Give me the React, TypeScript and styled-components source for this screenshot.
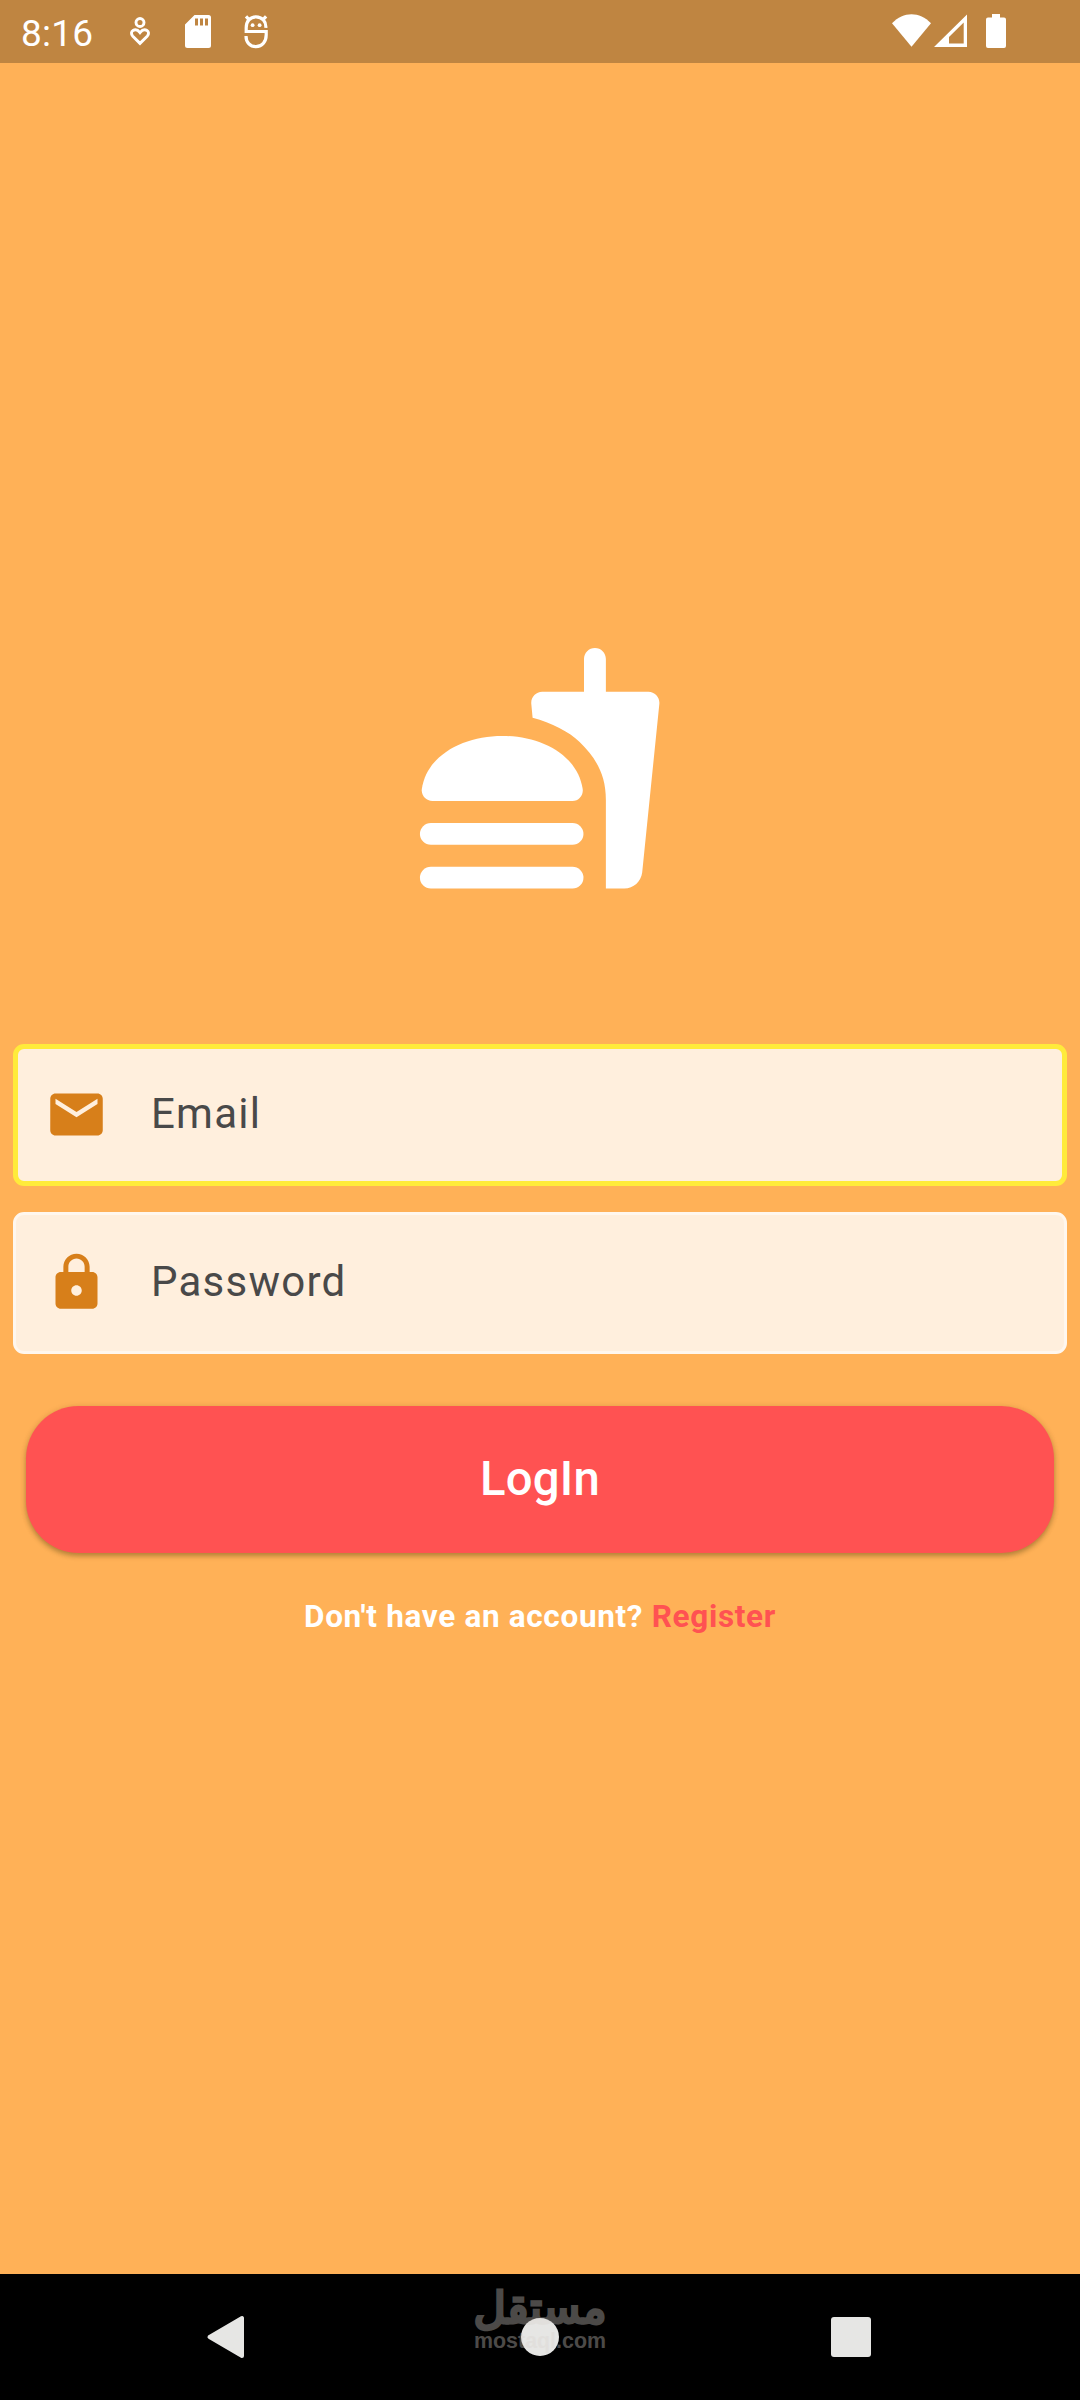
import React from "react";
import styled, { createGlobalStyle } from "styled-components";

const GlobalStyle = createGlobalStyle`
  *, *::before, *::after { box-sizing: border-box; }
  body { margin: 0; font-family: Roboto, sans-serif; }
`;

const Screen = styled.div`
  display: flex;
  flex-direction: column;
  width: 1080px;
  height: 2400px;
  background: #ffb157;
  overflow: hidden;
`;

const StatusBar = styled.header`
  display: flex;
  justify-content: space-between;
  height: 63px;
  padding: 0 72px 0 21px;
  background: #bf8541;
  color: #fff;
`;

const StatusGroup = styled.div`
  display: flex;
  align-items: center;
`;

const Clock = styled.span`
  width: 82px;
  margin-right: 6px;
  font-size: 37px;
  line-height: 44px;
  letter-spacing: 0.2px;
  padding-top: 4px;
  white-space: nowrap;
`;

const Icon = styled.svg<{ $w: number; $h: number }>`
  display: block;
  flex: none;
  width: ${(p) => p.$w}px;
  height: ${(p) => p.$h}px;
`;

const Main = styled.main`
  display: flex;
  flex-direction: column;
  flex: 1;
  padding: 573.5px 13px 0;
`;

const Logo = styled.div`
  display: flex;
  justify-content: center;
  height: 262.5px;
  margin-bottom: 145px;
`;

const Form = styled.form`
  display: flex;
  flex-direction: column;
  gap: 26px;
`;

const Field = styled.label<{ $focused?: boolean }>`
  display: flex;
  align-items: center;
  gap: 43px;
  height: 142px;
  padding: 0 ${(p) => (p.$focused ? 27 : 29)}px 1px;
  border: ${(p) => (p.$focused ? "5px solid #ffeb3b" : "3px solid #fff7ee")};
  border-radius: 11px;
  background: #ffefdd;
  color: #d77f1a;
`;

const FieldText = styled.span`
  padding-bottom: 1px;
  font-size: 42px;
  line-height: 50px;
  letter-spacing: 1.25px;
  color: #494949;
`;

const LoginButton = styled.button`
  height: 147px;
  margin: 26px 13px 0;
  padding: 0 0 1px;
  border: 0;
  border-radius: 52.5px;
  background: #ff5252;
  box-shadow: 0 3px 5px rgba(90, 70, 20, 0.38), 0 1px 6px rgba(90, 70, 20, 0.15);
  color: #fff;
  font: 500 47.25px Roboto, sans-serif;
  letter-spacing: 0.25px;
`;

const Prompt = styled.p`
  margin: 43px 0 0;
  text-align: center;
  font-size: 31.5px;
  line-height: 42px;
  font-weight: 700;
  letter-spacing: 0.67px;
  color: #fff;
`;

const RegisterLink = styled.span`
  color: #ff5252;
`;

const NavBar = styled.nav`
  position: relative;
  display: grid;
  grid-template-columns: 450px 180px 450px;
  align-items: center;
  justify-items: center;
  height: 126px;
  background: #000;
  color: #e6e6e4;
`;

const BackButton = styled.span`
  margin-right: 1px;
`;

const HomeDot = styled.span`
  width: 38px;
  height: 38px;
  border-radius: 50%;
  background: #e6e6e4;
`;

const RecentsSquare = styled.span`
  width: 40px;
  height: 40px;
  margin-right: 8px;
  border-radius: 3px;
  background: #e6e6e4;
`;

const Watermark = styled.div`
  position: absolute;
  top: 14px;
  left: 440px;
  width: 200px;
  opacity: 0.35;
  color: #d9d4cf;
  text-align: center;
  white-space: nowrap;
`;

const ArabicName = styled.div`
  height: 40px;
  font: 400 44px/40px "DejaVu Sans", sans-serif;
  -webkit-text-stroke: 3px #d9d4cf;
  paint-order: stroke;
  transform: scaleX(1.01);
`;

const Domain = styled.div`
  font: 700 21.4px/26px "Liberation Sans", sans-serif;
`;

export default function App() {
  return (
    <>
      <GlobalStyle />
      <Screen>
        <StatusBar>
          <StatusGroup>
            <Clock>8:16</Clock>
            <Icon $w={60} $h={63} viewBox="109 0 60 63" fill="none" stroke="#fff" strokeWidth={2.9}>
              <circle cx="140" cy="22.5" r="4" />
              <path d="M140 43.4l-7.2-7.2c-4.200-4.400 2.400-9.500 7.200-3.600 4.800-5.900 11.400-.8 7.200 3.600z" />
            </Icon>
            <Icon $w={60} $h={63} viewBox="169 0 60 63" fill="#fff">
              <path
                fillRule="evenodd"
                d="M194.500 15H208.500q2.500 0 2.500 2.500V45.500q0 2.500-2.500 2.500H187.500q-2.500 0-2.500-2.500V24.500zM195 18.500v7h3v-7zM200 18.500v7h3v-7zM205 18.500v7h3v-7z"
              />
            </Icon>
            <Icon $w={60} $h={63} viewBox="229 0 60 63" fill="none" stroke="#fff" strokeWidth={3.200}>
              <path d="M265.800 27.800c.5-6.500-3.800-11-9.800-11s-9.800 4.500-9.800 11v3.700h20v3.200c0 7-4 12-10.200 12s-10-4.500-10-10.700M248.800 19.300l-2.800-3M263.300 19.300l2.800-3" />
              <circle cx="252.600" cy="25.200" r="1.900" fill="#fff" stroke="none" />
              <circle cx="259.600" cy="25.200" r="1.900" fill="#fff" stroke="none" />
            </Icon>
          </StatusGroup>
          <Icon $w={122} $h={63} viewBox="886 0 122 63" fill="#fff">
            <path d="M892 23.300C903.500 11.200 919.500 11.200 931 23.300L911.500 46.800z" />
            <path fillRule="evenodd" d="M967 14.500V47H934zM963.700 22.500L949 37V43.500H963.700z" />
            <path d="M992 14h8v3.500h4q2 0 2 2V46q0 2-2 2H988q-2 0-2-2V19.500q0-2 2-2h4z" />
          </Icon>
        </StatusBar>

        <Main>
          <Logo>
            <Icon $w={262.5} $h={262.5} viewBox="0 0 24 24" fill="#fff">
              <path d="M16 5V2c0-.55.45-1 1-1s1 .45 1 1v3h3.890c.59 0 1.050.51 1 1.100l-1.570 15.430c-.1.820-.79 1.470-1.630 1.470H18v-8.100c0-2.400-.96-3.870-2.400-5.290-.96-.94-2.560-1.760-4.300-2.220L11.180 6.100c-.05-.59.41-1.100 1-1.100z" />
              <path d="M2.140 15c-.6 0-1.040-.53-.97-1.100C1.650 10.700 5.080 9.040 8.520 9.040s6.870 1.660 7.360 4.860c.08.57-.34 1.100-.94 1.100z" />
              <rect x="1" y="17" width="14.95" height="2" rx="1" />
              <rect x="1" y="21" width="14.95" height="2" rx="1" />
            </Icon>
          </Logo>

          <Form>
            <Field $focused>
              <Icon $w={63} $h={63} viewBox="0 0 24 24" fill="currentColor">
                <path d="M20 4H4c-1.100 0-1.990.9-1.990 2L2 18c0 1.100.9 2 2 2h16c1.100 0 2-.9 2-2V6c0-1.100-.9-2-2-2zm0 4l-8 5-8-5V6l8 5 8-5v2z" />
              </Icon>
              <FieldText>Email</FieldText>
            </Field>
            <Field>
              <Icon $w={63} $h={63} viewBox="0 0 24 24" fill="currentColor">
                <path d="M18 8h-1V6c0-2.760-2.240-5-5-5S7 3.240 7 6v2H6c-1.100 0-2 .9-2 2v10c0 1.100.9 2 2 2h12c1.100 0 2-.9 2-2V10c0-1.100-.9-2-2-2zm-6 9c-1.100 0-2-.9-2-2s.9-2 2-2 2 .9 2 2-.9 2-2 2zm3.100-9H8.900V6c0-1.710 1.390-3.100 3.100-3.100 1.710 0 3.100 1.390 3.100 3.100v2z" />
              </Icon>
              <FieldText>Password</FieldText>
            </Field>
            <LoginButton type="button">LogIn</LoginButton>
          </Form>

          <Prompt>
            Don't have an account? <RegisterLink>Register</RegisterLink>
          </Prompt>
        </Main>

        <NavBar>
          <BackButton>
            <Icon $w={40} $h={44} viewBox="0 0 40 44" fill="currentColor" stroke="currentColor" strokeWidth={4} strokeLinejoin="round">
              <path d="M37 3V41L4.500 22z" />
            </Icon>
          </BackButton>
          <HomeDot />
          <RecentsSquare />
          <Watermark>
            <ArabicName lang="ar">مستقل</ArabicName>
            <Domain>mostaql.com</Domain>
          </Watermark>
        </NavBar>
      </Screen>
    </>
  );
}
